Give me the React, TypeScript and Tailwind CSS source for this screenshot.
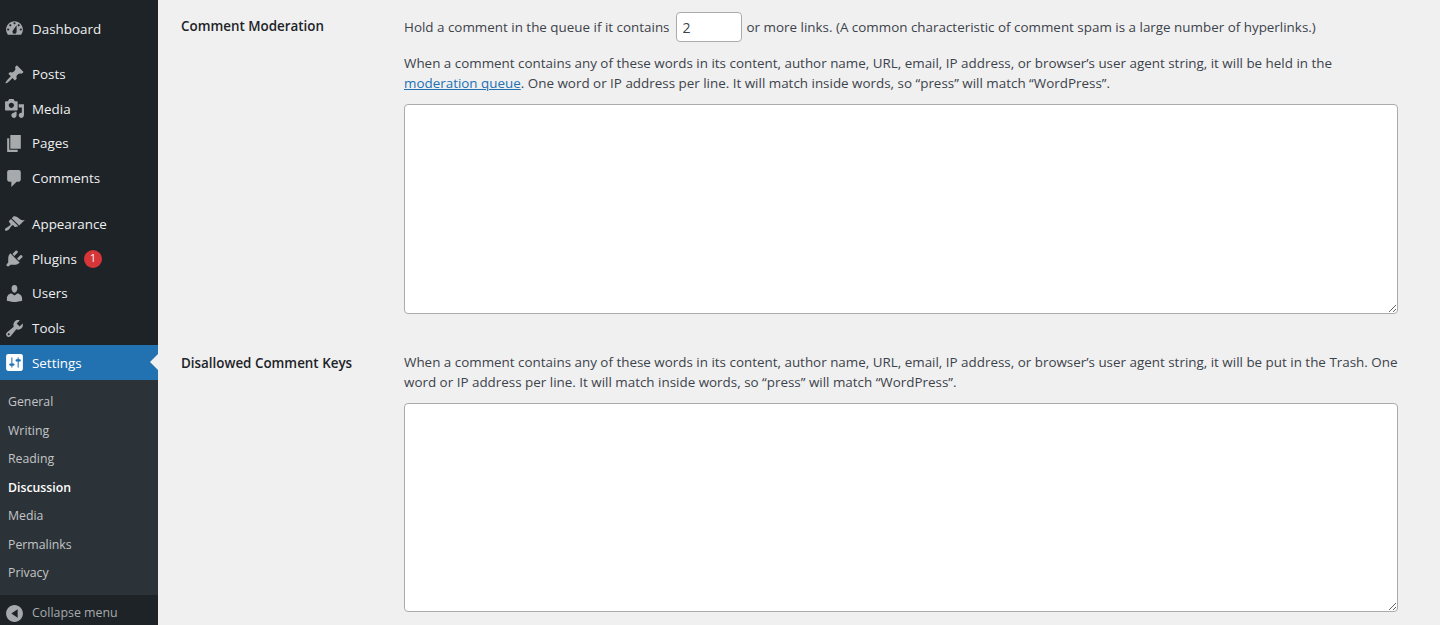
const icons: Record<string, string> = {
  dashboard:
    'M3.76 16h12.48c1.1-1.37 1.76-3.11 1.76-5 0-4.42-3.58-8-8-8s-8 3.58-8 8c0 1.89.66 3.63 1.76 5zM10 4c.55 0 1 .45 1 1s-.45 1-1 1-1-.45-1-1 .45-1 1-1zM6 6c.55 0 1 .45 1 1s-.45 1-1 1-1-.45-1-1 .45-1 1-1zm8 0c.55 0 1 .45 1 1s-.45 1-1 1-1-.45-1-1 .45-1 1-1zm-5.37 5.55L12 7v6c0 1.1-.9 2-2 2s-2-.9-2-2c0-.57.24-1.08.63-1.45zM4 10c.55 0 1 .45 1 1s-.45 1-1 1-1-.45-1-1 .45-1 1-1zm12 0c.55 0 1 .45 1 1s-.45 1-1 1-1-.45-1-1 .45-1 1-1z',
  posts:
    'M10.44 3.02l1.82-1.82 6.36 6.35-1.83 1.82c-1.05-.68-2.48-.57-3.41.36l-.75.75c-.92.93-1.04 2.35-.35 3.41l-1.83 1.82-2.41-2.41-2.8 2.79c-.42.42-3.38 2.71-3.8 2.29s1.86-3.39 2.28-3.81l2.79-2.79L4.1 9.36l1.83-1.82c1.05.69 2.48.57 3.4-.36l.75-.75c.93-.92 1.05-2.35.36-3.41z',
  media:
    'M13 11V4c0-.55-.45-1-1-1h-1.67L9 1H5L3.67 3H2c-.55 0-1 .45-1 1v7c0 .55.45 1 1 1h10c.55 0 1-.45 1-1zM7 4.5c1.38 0 2.5 1.12 2.5 2.5S8.38 9.5 7 9.5 4.5 8.38 4.5 7 5.62 4.5 7 4.5zM14 6h5v10.5c0 1.38-1.12 2.5-2.5 2.5S14 17.88 14 16.5s1.12-2.5 2.5-2.5c.17 0 .34.02.5.05V9h-3V6zm-4 8.05V13h2v3.5c0 1.38-1.12 2.5-2.5 2.5S7 17.88 7 16.5 8.12 14 9.5 14c.17 0 .34.02.5.05z',
  pages: 'M6 15V2h10v13H6zm-1 1h8v2H3V5h2v11z',
  comments: 'M5 2h9c1.1 0 2 .9 2 2v7c0 1.1-.9 2-2 2h-2l-5 5v-5H5c-1.1 0-2-.9-2-2V4c0-1.1.9-2 2-2z',
  appearance:
    'M14.48 11.06L7.41 3.99l1.5-1.5c.5-.56 2.3-.47 3.51.32 1.21.8 1.43 1.28 2.91 2.1 1.18.64 2.45 1.26 4.45.85zm-.71.71L6.7 4.7 4.93 6.47c-.39.39-.39 1.02 0 1.41l1.06 1.06c.39.39.39 1.03 0 1.42-.6.6-1.43 1.11-2.21 1.69-.35.26-.7.53-1.01.84C1.43 13.23.4 14.96 1.2 15.76c.8.8 2.53-.23 3.85-1.55.31-.31.58-.66.84-1.01.58-.78 1.09-1.61 1.69-2.21.39-.39 1.03-.39 1.42 0l1.06 1.06c.39.39 1.02.39 1.41 0z',
  plugins:
    'M13.11 4.36L9.87 7.6 8 5.73l3.24-3.24c.35-.34 1.05-.2 1.56.32.52.51.66 1.21.31 1.55zm-8 1.77l.91-1.12 9.01 9.01-1.19.84c-.71.71-2.63 1.16-3.82 1.16H6.14L4.9 17.26c-.59.59-1.54.59-2.12 0-.59-.58-.59-1.53 0-2.12l1.24-1.24v-3.88c0-1.13.4-3.19 1.09-3.89zm7.26 3.97l3.24-3.24c.34-.35 1.04-.21 1.55.31.52.51.66 1.21.31 1.55l-3.24 3.25z',
  users:
    'M10 9.25c-2.27 0-2.73-3.44-2.73-3.44C7 4.02 7.82 2 9.97 2c2.16 0 2.98 2.02 2.71 3.81 0 0-.41 3.44-2.68 3.44zm0 2.57L12.72 10c2.39 0 4.52 2.33 4.52 4.53v2.49s-3.65 1.13-7.24 1.13c-3.65 0-7.24-1.13-7.24-1.13v-2.49c0-2.25 1.94-4.48 4.47-4.48z',
  tools:
    'M16.68 9.77c-1.34 1.34-3.3 1.67-4.95.99l-5.41 6.52c-.99.99-2.59.99-3.58 0s-.99-2.59 0-3.57l6.52-5.42c-.68-1.65-.35-3.61.99-4.95 1.28-1.28 3.12-1.62 4.72-1.06l-2.89 2.89 2.82 2.82 2.86-2.87c.53 1.58.18 3.39-1.08 4.65zM3.81 16.21c.4.39 1.04.39 1.43 0 .4-.4.4-1.04 0-1.43-.39-.4-1.03-.4-1.43 0-.39.39-.39 1.03 0 1.43z',
  settings:
    'M18 16V4c0-1.1-.9-2-2-2H4c-1.1 0-2 .9-2 2v12c0 1.1.9 2 2 2h12c1.1 0 2-.9 2-2zM8 11h1c.55 0 1 .45 1 1s-.45 1-1 1H8v1.5c0 .28-.22.5-.5.5s-.5-.22-.5-.5V13H6c-.55 0-1-.45-1-1s.45-1 1-1h1V5.5c0-.28.22-.5.5-.5s.5.22.5.5V11zm5-2h-1c-.55 0-1-.45-1-1s.45-1 1-1h1V5.5c0-.28.22-.5.5-.5s.5.22.5.5V7h1c.55 0 1 .45 1 1s-.45 1-1 1h-1v5.5c0 .28-.22.5-.5.5s-.5-.22-.5-.5V9z',
  collapse: 'M18 10c0-4.42-3.58-8-8-8s-8 3.58-8 8 3.58 8 8 8 8-3.58 8-8zm-5 4l-6-4 6-4v8z',
}

function Icon({ name, className }: { name: string; className?: string }) {
  return (
    <svg viewBox="0 0 20 20" className={`h-[21px] w-[21px] shrink-0 fill-current ${className ?? ''}`}>
      <path d={icons[name]} />
    </svg>
  )
}

function MenuItem({ icon, label, badge }: { icon: string; label: string; badge?: string }) {
  return (
    <div className="flex h-[34.6px] items-center text-[13.4px] text-[#f0f0f1]">
      <div className="flex w-[32px] pl-[4px] text-[#a7aaad]">
        <Icon name={icon} />
      </div>
      <span>{label}</span>
      {badge && (
        <span className="ml-[7px] flex h-[18px] w-[18px] items-center justify-center rounded-full bg-[#d63638] text-[10.5px] text-white">
          {badge}
        </span>
      )}
    </div>
  )
}

const submenu = ['General', 'Writing', 'Reading', 'Discussion', 'Media', 'Permalinks', 'Privacy']

function Sidebar() {
  return (
    <aside className="flex h-[625px] w-[158px] shrink-0 flex-col bg-[#1d2327]">
      <div className="pt-[11.4px]">
        <MenuItem icon="dashboard" label="Dashboard" />
      </div>
      <div className="pt-[11px]">
        <MenuItem icon="posts" label="Posts" />
        <MenuItem icon="media" label="Media" />
        <MenuItem icon="pages" label="Pages" />
        <MenuItem icon="comments" label="Comments" />
      </div>
      <div className="pt-[11.6px]">
        <MenuItem icon="appearance" label="Appearance" />
        <MenuItem icon="plugins" label="Plugins" badge="1" />
        <MenuItem icon="users" label="Users" />
        <MenuItem icon="tools" label="Tools" />
      </div>
      <div className="relative flex h-[35px] items-center bg-[#2271b1] text-[13.4px] text-white">
        <div className="flex w-[32px] pl-[4px]">
          <Icon name="settings" />
        </div>
        <span>Settings</span>
        <div className="absolute right-0 top-[9px] h-0 w-0 border-y-[8px] border-r-[8px] border-y-transparent border-r-[#f0f0f1]" />
      </div>
      <div className="flex-1 bg-[#2c3338] pt-[7.5px]">
        {submenu.map((item) => (
          <div
            key={item}
            className={`flex h-[28.6px] items-center pl-[8px] text-[12.3px] ${item === 'Discussion' ? 'font-semibold text-white' : 'text-[#c3c4c7]'}`}
          >
            {item}
          </div>
        ))}
      </div>
      <div className="flex h-[30px] items-center pt-[7px] text-[12.4px] text-[#a7aaad]">
        <div className="flex w-[32px] pl-[4px]">
          <Icon name="collapse" />
        </div>
        <span>Collapse menu</span>
      </div>
    </aside>
  )
}

function KeywordBox({ height }: { height: string }) {
  return (
    <textarea
      className={`block w-[994px] rounded-[4px] border border-[#a9abae] bg-white ${height}`}
      aria-label="Keys"
    />
  )
}

export default function App() {
  return (
    <div className="flex h-[625px] w-[1440px] overflow-hidden bg-[#f0f0f1] font-['Open_Sans','Noto_Sans',sans-serif]">
      <Sidebar />
      <main className="flex-1 pl-[23px] text-[13.41px] text-[#3c434a]">
        <section className="flex pt-[12px]">
          <h2 className="w-[223px] shrink-0 pt-[4px] text-[13.4px] font-semibold text-[#1d2327]">Comment Moderation</h2>
          <div>
            <p className="flex h-[30px] items-center">
              Hold a comment in the queue if it contains
              <input
                defaultValue="2"
                className="ml-[6px] mr-[5px] h-[30px] w-[66px] rounded-[4px] border border-[#a9abae] bg-white px-[6px] text-[14px] text-[#3c434a]"
              />
              or more links. (A common characteristic of comment spam is a large number of hyperlinks.)
            </p>
            <p className="mt-[11px] w-[994px] leading-[20px]">
              When a comment contains any of these words in its content, author name, URL, email, IP address, or browser’s user agent string, it will be held in the{' '}
              <a className="text-[#2271b1] underline">moderation queue</a>. One word or IP address per line. It will match inside words, so “press” will match “WordPress”.
            </p>
            <div className="mt-[10.5px]">
              <KeywordBox height="h-[210px]" />
            </div>
          </div>
        </section>
        <section className="flex pt-[38px]">
          <h2 className="w-[223px] shrink-0 pt-[1px] text-[13.4px] font-semibold text-[#1d2327]">Disallowed Comment Keys</h2>
          <div>
            <p className="w-[994px] leading-[20.5px]">
              When a comment contains any of these words in its content, author name, URL, email, IP address, or browser’s user agent string, it will be put in the Trash. One word or IP address per line. It will match inside words, so “press” will match “WordPress”.
            </p>
            <div className="mt-[10.5px]">
              <KeywordBox height="h-[209px]" />
            </div>
          </div>
        </section>
      </main>
    </div>
  )
}
